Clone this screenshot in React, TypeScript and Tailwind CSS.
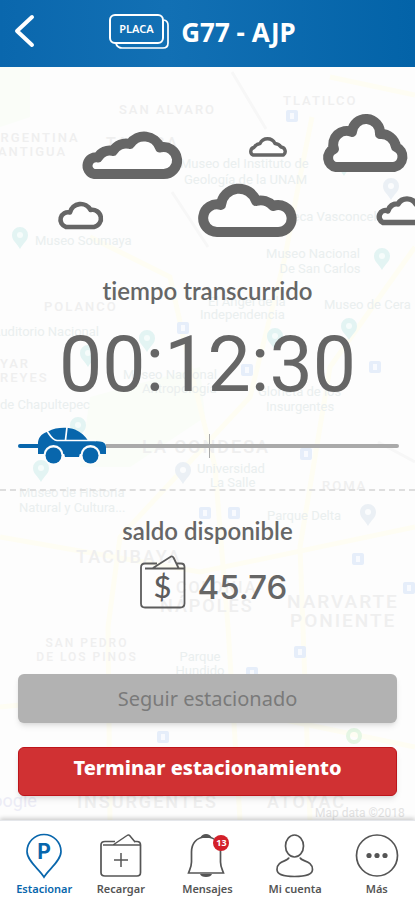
import type { ReactNode } from "react";
import { clsx } from "clsx";

interface MapLabel {
    x: number;
    y: number;
    text: string;
    size?: number;
    district?: boolean;
    anchor?: "start" | "middle";
}

const MAP_LABELS: MapLabel[] = [
    { x: 119, y: 47, text: "SAN ALVARO", district: true },
    { x: 283, y: 38, text: "TLATILCO", district: true },
    { x: -10, y: 75, text: "ARGENTINA", district: true },
    { x: -2, y: 89, text: "ANTIGUA", district: true },
    { x: 106, y: 82, text: "TACUBA", size: 16, district: true },
    { x: 180, y: 101, text: "Museo del Instituto de" },
    { x: 184, y: 117, text: "Geología de la UNAM" },
    { x: 256, y: 154, text: "Biblioteca Vasconcelos" },
    { x: 35, y: 178, text: "Museo Soumaya" },
    { x: 313, y: 191, text: "Museo Nacional", anchor: "middle" },
    { x: 320, y: 206, text: "De San Carlos", anchor: "middle" },
    { x: 44, y: 244, text: "POLANCO", district: true },
    { x: 208, y: 239, text: "El Ángel de la" },
    { x: 200, y: 252, text: "Independencia" },
    { x: 324, y: 242, text: "Museo de Cera" },
    { x: -8, y: 269, text: "Auditorio Nacional" },
    { x: 0, y: 301, text: "YAR", district: true },
    { x: 0, y: 315, text: "REYES", district: true },
    { x: 123, y: 312, text: "Museo Nacional" },
    { x: 142, y: 326, text: "Antropología" },
    { x: 0, y: 342, text: "de Chapultepec" },
    { x: 258, y: 329, text: "Glorieta de los" },
    { x: 266, y: 344, text: "Insurgentes" },
    { x: 142, y: 386, text: "LA CONDESA", size: 18, district: true },
    { x: 197, y: 406, text: "Universidad" },
    { x: 210, y: 420, text: "La Salle" },
    { x: 322, y: 423, text: "ROMA", size: 13, district: true },
    { x: 19, y: 430, text: "Museo de Historia" },
    { x: 19, y: 445, text: "Natural y Cultura..." },
    { x: 267, y: 453, text: "Parque Delta" },
    { x: 76, y: 496, text: "TACUBAYA", size: 18, district: true },
    { x: 176, y: 526, text: "COLONIA", size: 16, district: true },
    { x: 160, y: 545, text: "NÁPOLES", size: 18, district: true },
    { x: 287, y: 541, text: "NARVARTE", size: 19, district: true },
    { x: 290, y: 560, text: "PONIENTE", size: 19, district: true },
    { x: 87, y: 580, text: "SAN PEDRO", size: 12, district: true, anchor: "middle" },
    { x: 87, y: 594, text: "DE LOS PINOS", size: 12, district: true, anchor: "middle" },
    { x: 200, y: 594, text: "Parque", anchor: "middle" },
    { x: 200, y: 608, text: "Hundido", anchor: "middle" },
    { x: 77, y: 741, text: "INSURGENTES", size: 18, district: true },
    { x: 267, y: 741, text: "ATOYAC", size: 18, district: true },
];

const MAP_PINS = [
    [20, 169], [382, 190], [349, 260], [147, 272], [88, 287], [275, 270], [78, 359], [41, 402], [344, 96],
];
const MAP_STOPS = [
    [292, 49], [183, 261], [247, 303], [375, 300], [306, 387], [205, 446], [234, 446],
    [358, 492], [409, 521], [300, 585], [252, 606], [163, 670],
];

function MapBackground() {
    return (
        <svg
            aria-hidden="true"
            className="absolute inset-0 h-full w-full"
            viewBox="0 0 415 753"
            preserveAspectRatio="xMidYMid slice"
        >
            <rect width="415" height="753" fill="#fdfdfd" />
            <path d="M0 0H30V50L0 60ZM90 330L200 300L205 350L130 400L80 400Z" fill="#fafdf8" />
            <g fill="none" stroke="#fefdf3" strokeWidth="5">
                <path d="M330 10L415 28M312 50L300 110L285 190L250 330L120 470L108 560L110 753" />
                <path d="M90 170L170 210L190 300L215 400L228 560L240 753" />
                <path d="M0 470L200 505L415 460M0 640L150 625L415 680" />
                <path d="M415 180L330 300L300 480L310 753" />
            </g>
            <path d="M232 5L266 62M172 125L208 180M378 375L415 395" stroke="#f7f7f7" strokeWidth="3" />
            {MAP_PINS.map(([x, y]) => (
                <g key={`${x}-${y}`} transform={`translate(${x} ${y})`}>
                    <path d="M0 13C-3 7-8 5-8-1A8 8 0 0 1 8-1C8 5 3 7 0 13Z" fill="#e3f4f3" />
                    <circle cy="-1" r="3" fill="#f6fcfb" />
                </g>
            ))}
            {[[183, 404], [368, 446], [391, 120]].map(([x, y]) => (
                <g key={`${x}-${y}`} transform={`translate(${x} ${y})`}>
                    <path d="M0 13C-3 7-8 5-8-1A8 8 0 0 1 8-1C8 5 3 7 0 13Z" fill="#ebf0f5" />
                    <circle cy="-1" r="3" fill="#fbfcfd" />
                </g>
            ))}
            {MAP_STOPS.map(([x, y]) => (
                <g key={`${x}-${y}`}>
                    <rect x={x - 6} y={y - 6} width="12" height="12" rx="2" fill="#e6eefa" />
                    <rect x={x - 2} y={y - 3} width="4" height="6" fill="#f8fafe" />
                </g>
            ))}
            <circle cx="354" cy="669" r="6" fill="none" stroke="#e4f6e4" strokeWidth="4" />
            <g fontFamily="Roboto, sans-serif">
                {MAP_LABELS.map(({ x, y, text, size = 13, district, anchor = "start" }) => (
                    <text
                        key={`${text}-${y}`}
                        x={x}
                        y={y}
                        fontSize={size}
                        textAnchor={anchor}
                        fontWeight={district ? 500 : 400}
                        letterSpacing={district ? 2 : 0}
                        fill={district ? "#efefef" : "#eaefef"}
                    >
                        {text}
                    </text>
                ))}
                <text x="-20" y="740" fontSize="18" fill="#ececf6">Google</text>
                <text x="315" y="750" fontSize="12" fill="#e2e2e2">Map data ©2018</text>
            </g>
        </svg>
    );
}

function Clouds() {
    return (
        <svg
            aria-hidden="true"
            className="block w-full"
            viewBox="0 67 415 208"
            fill="#fefefe"
            stroke="#666"
            strokeLinejoin="round"
        >
            <g strokeWidth="10">
                <path d="M94 174H163A13.500 13.500 0 1 0 160 147.500A17 17 0 0 0 130 144A15 15 0 0 0 113 151A13 13 0 0 0 98 157.500A8.400 8.400 0 1 0 94 174Z" />
                <path d="M217 232H278A13.500 13.500 0 1 0 273 206A17 17 0 0 0 256 201A18 18 0 0 0 221 205A13.800 13.800 0 1 0 217 232Z" />
                <path d="M336 167H394A10.500 10.500 0 0 0 396 147A15 15 0 0 0 380 134A14 14 0 0 0 352 132A13.500 13.500 0 0 0 334 149A9.400 9.400 0 0 0 336 167Z" />
            </g>
            <path d="M66 227H94A8.500 8.500 0 1 0 90.500 210A11 11 0 0 0 70 212.500A7.400 7.400 0 1 0 66 227Z" strokeWidth="4.6" />
            <path d="M253 155H283.500A4.500 4.500 0 0 0 281 147A8 8 0 0 0 275 143.500A8.300 8.300 0 0 0 260 143.500A8 8 0 0 0 254 147.500A4 4 0 0 0 253 155Z" strokeWidth="3.4" />
            <path d="M383 222.500H425A9 9 0 0 0 416 204A10.500 10.500 0 0 0 398 204A9 9 0 0 0 388 211A6 6 0 0 0 383 222.500Z" strokeWidth="5.400" />
        </svg>
    );
}

function PlateIcon() {
    return (
        <svg aria-hidden="true" width="60" height="35" viewBox="0 0 60 35" fill="none" stroke="#fff">
            <path d="M55 6Q59 7 59 11V29Q59 34 54 34H13Q9 34 7 30" strokeWidth="1.7" />
            <rect x="1" y="1" width="53" height="28" rx="5" strokeWidth="2" />
            <text
                x="27.5"
                y="19"
                textAnchor="middle"
                fill="#fff"
                stroke="none"
                fontFamily="'Noto Sans', sans-serif"
                fontSize="11"
                fontWeight="600"
            >
                PLACA
            </text>
        </svg>
    );
}

function CarIcon() {
    return (
        <svg aria-hidden="true" width="68" height="38" viewBox="0 0 68 38">
            <path
                d="M0 27V15C1 9 5 6 10 4.500C18 0 30 0 37 2.500C43 5 47 9 50 13.500L62 14.500Q68 15 68 20V27Z"
                fill="#0866ac"
            />
            <path d="M9 4C12 8 14 13 19 13.500H58M29 0L27.500 13" fill="none" stroke="#fff" strokeWidth="1.7" />
            <circle cx="15.500" cy="28" r="10" fill="#fdfdfd" />
            <circle cx="52.500" cy="28" r="10" fill="#fdfdfd" />
            <circle cx="15.500" cy="28.500" r="8" fill="#0866ac" />
            <circle cx="52.500" cy="28.500" r="8" fill="#0866ac" />
            <path d="M26 26H42L41 30H27Z" fill="#0866ac" />
        </svg>
    );
}

function WalletIcon() {
    return (
        <svg aria-hidden="true" width="46" height="54" viewBox="0 0 46 54" fill="none" stroke="#5c5c5c" strokeWidth="1.8">
            <path d="M17 8.500H5Q1 8.500 1 12.500V48.500Q1 52.500 5 52.500H40Q44.500 52.500 44.500 48.500V12Q44.500 8.500 41 8.500H37" />
            <path d="M5 13.500H44M13 13L31 1.500Q32.500 1 33.500 2.500L38.500 13" />
            <text
                x="22.500"
                y="43"
                textAnchor="middle"
                fill="#5c5c5c"
                stroke="none"
                fontFamily="Lato, sans-serif"
                fontSize="31"
            >
                $
            </text>
        </svg>
    );
}

function NavIcon({ children }: { children: ReactNode }) {
    return (
        <svg aria-hidden="true" width="44" height="46" viewBox="0 0 44 46" fill="none" stroke="currentColor" strokeWidth="1.7">
            {children}
        </svg>
    );
}

const NAV_ITEMS = [
    {
        label: "Estacionar",
        active: true,
        icon: (
            <>
                <path d="M22 44C18 37 5 28 5 18.500A17 17 0 0 1 39 18.500C39 28 26 37 22 44Z" />
                <text x="22" y="26" textAnchor="middle" fill="currentColor" stroke="none" fontFamily="Inter, sans-serif" fontSize="21" fontWeight="700">
                    P
                </text>
            </>
        ),
    },
    {
        label: "Recargar",
        icon: (
            <>
                <path d="M16 8.500H6Q2 8.500 2 12V39.500Q2 43 6 43H38Q41.500 43 41.500 39.500V12Q41.500 8.500 38 8.500H35" />
                <path d="M4 12H41M14 12L28 2.500Q30 1 31.500 3.500L36 9M22 20V34M15 27H29" strokeWidth="1.5" />
            </>
        ),
    },
    {
        label: "Mensajes",
        badge: "13",
        icon: (
            <>
                <path d="M15 5Q17 1 21 1T27 5Z" fill="currentColor" stroke="none" />
                <path d="M21 4C11 4 6.500 11 6.500 19V29C6.500 34 4.500 37 3.500 40H38.500C37.500 37 35.500 34 35.500 29V19C35.500 11 31 4 21 4Z" />
                <path d="M15 41H27Q26 44 21 44T15 41Z" fill="currentColor" stroke="none" />
            </>
        ),
    },
    {
        label: "Mi cuenta",
        icon: (
            <>
                <ellipse cx="21.500" cy="13" rx="9" ry="11" />
                <path d="M16 24.500C15 29 4 27 4 36.500C4 41 10 43.500 21.500 43.500S39.500 41 39.500 36.500C39.500 27 28 29 27 24.500" />
            </>
        ),
    },
    {
        label: "Más",
        icon: (
            <>
                <circle cx="22" cy="22.500" r="20.500" />
                <g fill="currentColor" stroke="none">
                    <circle cx="14" cy="22.500" r="2.600" />
                    <circle cx="22" cy="22.500" r="2.600" />
                    <circle cx="30" cy="22.500" r="2.600" />
                </g>
            </>
        ),
    },
];

function BottomNav() {
    return (
        <nav className="relative grid h-20 shrink-0 grid-cols-[68fr_84fr_88fr_86fr_76fr] border-t border-gray-200 bg-white pl-[10px] pt-3 shadow-[0_-2px_4px_rgba(0,0,0,0.18)]">
            {NAV_ITEMS.map(({ label, icon, badge, active }) => (
                <a
                    key={label}
                    href="#"
                    className={clsx(
                        "flex flex-col items-center gap-0.5 font-['Noto_Sans',sans-serif] text-[11px] font-semibold leading-4",
                        active ? "text-[#0866ac]" : "text-[#555]"
                    )}
                >
                    <span className="relative">
                        <NavIcon>{icon}</NavIcon>
                        {badge && (
                            <span className="absolute right-0 top-0.5 flex size-4 items-center justify-center rounded-full bg-[#d3202a] text-[9px] font-bold text-white">
                                {badge}
                            </span>
                        )}
                    </span>
                    {label}
                </a>
            ))}
        </nav>
    );
}

export default function App() {
    return (
        <div className="flex min-h-screen flex-col bg-white">
            <header className="grid h-[67px] shrink-0 grid-cols-[1fr_auto_1fr] items-center bg-linear-to-r from-[#0a67ad] via-[#1270b4] via-40% to-[#0363a8] px-3 pb-1">
                <button type="button" aria-label="Volver" className="justify-self-start">
                    <svg aria-hidden="true" width="24" height="36" viewBox="0 0 24 36" fill="none" stroke="#fff" strokeWidth="4" strokeLinecap="round" strokeLinejoin="round">
                        <path d="M20 3L5 17L20 31" />
                    </svg>
                </button>
                <h1 className="flex items-center gap-3 pr-[10px] font-['Noto_Sans',sans-serif] text-[26px] font-bold leading-8 text-white">
                    <PlateIcon />
                    G77 - AJP
                </h1>
            </header>

            <main className="relative flex grow flex-col overflow-hidden">
                <MapBackground />
                <div className="relative flex grow flex-col text-[#666]">
                    <Clouds />
                    <section className="flex flex-col items-center">
                        <h2 className="font-['Lato',sans-serif] text-[24px] font-semibold leading-8 [font-variant-ligatures:none]">
                            tiempo transcurrido
                        </h2>
                        <p className="mt-4 font-['Roboto',sans-serif] text-[77px] leading-[84px]">00:12:30</p>
                        <div
                            role="progressbar"
                            aria-label="tiempo transcurrido"
                            aria-valuenow={12}
                            className="mt-5 flex w-full items-center pl-[18px] pr-4"
                        >
                            <span className="h-1 w-5 rounded-l-full bg-[#0866ac]" />
                            <CarIcon />
                            <span className="flex h-6 grow items-center">
                                <span className="h-1 w-[35%] bg-[#aaa]" />
                                <span className="h-6 w-px bg-[#aaa]" />
                                <span className="h-1 grow rounded-r-full bg-[#aaa]" />
                            </span>
                        </div>
                    </section>

                    <section className="mt-6 flex flex-col items-center border-t-2 border-dashed border-[#dedede] pt-6">
                        <h2 className="font-['Lato',sans-serif] text-[24px] font-semibold leading-8 [font-variant-ligatures:none]">
                            saldo disponible
                        </h2>
                        <p className="mt-2 flex items-end gap-3 pl-3 font-['Inter',sans-serif] text-[33px] font-medium leading-[44px]">
                            <WalletIcon />
                            45.76
                        </p>
                    </section>

                    <div className="mt-auto flex flex-col gap-6 px-[18px] pb-6 font-['Noto_Sans',sans-serif] text-[20px] leading-6">
                        <button type="button" disabled className="h-[49px] rounded-md bg-[#b2b2b2] text-[#7a7a7a] shadow-md">
                            Seguir estacionado
                        </button>
                        <button type="button" className="h-[49px] rounded-md border border-[#bd151b] bg-[#d03133] pb-2 font-extrabold text-white shadow-md">
                            Terminar estacionamiento
                        </button>
                    </div>
                </div>
            </main>

            <BottomNav />
        </div>
    );
}
